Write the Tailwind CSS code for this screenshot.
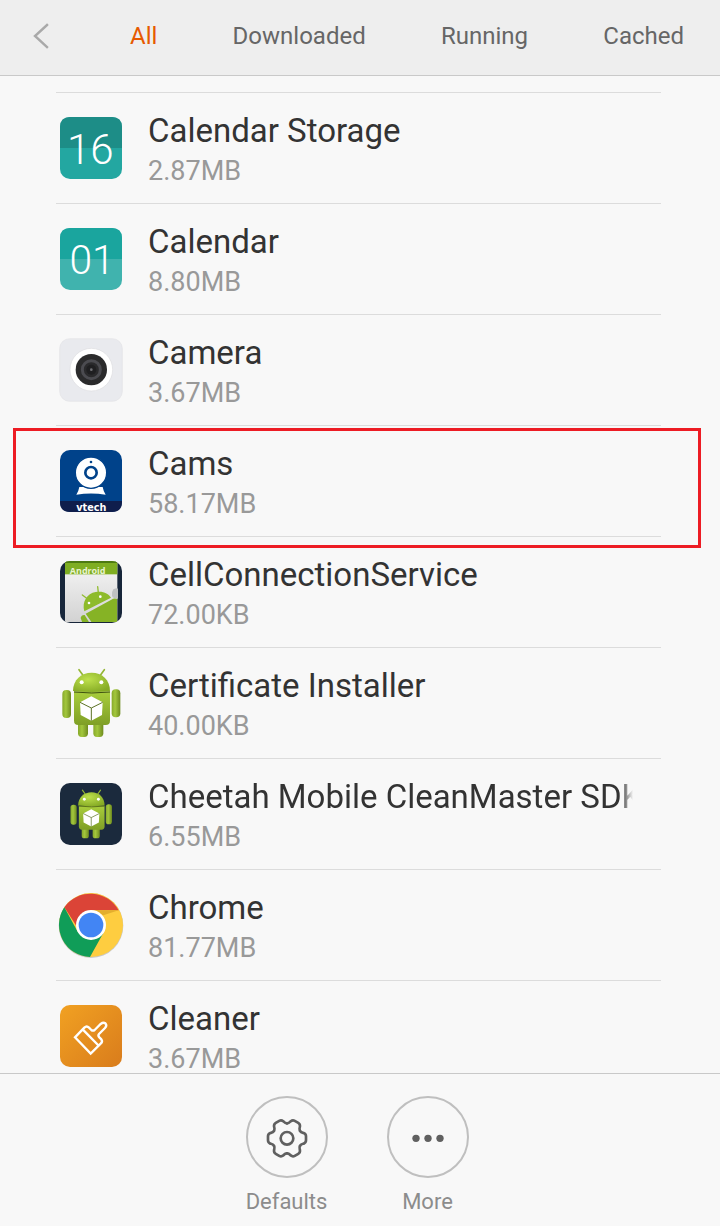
<!DOCTYPE html>
<html lang="en">
<head>
  <meta charset="UTF-8" />
  <meta name="viewport" content="width=device-width, initial-scale=1.0"/>
  <title>Apps</title>
  <script src="https://cdn.jsdelivr.net/npm/@tailwindcss/browser@4"></script>
</head>
<body class="flex h-screen flex-col bg-[#f8f8f8] font-['Roboto',sans-serif]">

  <!-- shared shapes -->
  <svg class="absolute size-0" aria-hidden="true">
    <defs>
      <linearGradient id="green" x1="0" y1="0" x2="0" y2="1">
        <stop offset="0" stop-color="#a9ce3c"/>
        <stop offset="1" stop-color="#7f9f26"/>
      </linearGradient>
      <radialGradient id="head" cx="0.4" cy="0.35" r="0.7">
        <stop offset="0" stop-color="#bde04c"/>
        <stop offset="1" stop-color="#86ab25"/>
      </radialGradient>
      <linearGradient id="arm" x1="0" y1="0" x2="1" y2="0">
        <stop offset="0" stop-color="#87a92b"/>
        <stop offset="0.4" stop-color="#a3c73d"/>
        <stop offset="1" stop-color="#6f8c1f"/>
      </linearGradient>
    </defs>
    <symbol id="robot" viewBox="18 24 210 210">
      <path d="M87 29l13 18M163 29l-13 18" stroke="#94b635" stroke-width="5" stroke-linecap="round"/>
      <rect x="84" y="180" width="30" height="51" rx="11" fill="url(#arm)"/>
      <rect x="130" y="180" width="30" height="51" rx="11" fill="url(#arm)"/>
      <rect x="37" y="90" width="26" height="84" rx="12" fill="url(#arm)"/>
      <rect x="185" y="88" width="26" height="84" rx="12" fill="url(#arm)"/>
      <path d="M72 94h108v88q0 13-13 13H85q-13 0-13-13z" fill="url(#green)"/>
      <path d="M69 93c0-34 25-55 56-55s55 21 55 55q-55 6-111 0z" fill="url(#head)"/>
      <path d="M72 96q53 6 108 0" fill="none" stroke="#3f5210" stroke-width="3"/>
      <circle cx="95" cy="67" r="6" fill="#fff"/>
      <circle cx="154" cy="67" r="6" fill="#fff"/>
      <path d="M124 109l34 18-2 38-32 17-32-17-2-38z" fill="#fff"/>
      <path d="M90 127l34 17 34-17M124 144v38" fill="none" stroke="#5d7326" stroke-width="3"/>
    </symbol>
  </svg>

  <header class="flex h-[76px] shrink-0 items-center border-b border-[#c9c9c9] bg-[#eeeeee] pr-9 pb-[3px] pl-8">
    <button type="button" aria-label="Back" class="w-[98px]">
      <svg class="h-7 w-5" viewBox="0 0 20 28" fill="none" stroke="#a9a9a9" stroke-width="2.4" stroke-linecap="square"><path d="M15 3L3 14l12 11"/></svg>
    </button>
    <nav class="flex flex-1 justify-between text-2xl text-[#666666]">
      <button type="button" class="text-[#e65a00]">All</button>
      <button type="button">Downloaded</button>
      <button type="button">Running</button>
      <button type="button">Cached</button>
    </nav>
  </header>

  <main class="min-h-0 flex-1 overflow-y-auto pt-4 pr-[59px] pl-14 [scrollbar-width:none]">
    <ul>
      <li class="flex h-[111px] items-center gap-[22px] border-t border-[#dcdcdc] pr-7">
        <svg class="size-[70px] shrink-0" viewBox="18 24 210 210">
          <rect x="30" y="36" width="186" height="186" rx="30" fill="#23a7a1"/>
          <path d="M30 129V66q0-30 30-30h126q30 0 30 30v63z" fill="#1d8d87"/>
          <text x="121" y="176" text-anchor="middle" font-family="Roboto" font-weight="300" font-size="126" fill="#fff">16</text>
        </svg>
        <div class="min-w-0 flex-1 pt-0.5">
          <h2 class="mb-1 truncate text-[33px] leading-10 text-[#333333]">Calendar Storage</h2>
          <p class="text-[27px] leading-8 text-[#999999]">2.87MB</p>
        </div>
      </li>
      <li class="flex h-[111px] items-center gap-[22px] border-t border-[#dcdcdc] pr-7">
        <svg class="size-[70px] shrink-0" viewBox="18 27 210 210">
          <rect x="30" y="39" width="186" height="186" rx="30" fill="#40b3ae"/>
          <path d="M30 132V69q0-30 30-30h126q30 0 30 30v63z" fill="#1aa59e"/>
          <text x="126" y="177" text-anchor="middle" font-family="Roboto" font-weight="300" font-size="122" fill="#fff">01</text>
        </svg>
        <div class="min-w-0 flex-1 pt-0.5">
          <h2 class="mb-1 truncate text-[33px] leading-10 text-[#333333]">Calendar</h2>
          <p class="text-[27px] leading-8 text-[#999999]">8.80MB</p>
        </div>
      </li>
      <li class="flex h-[111px] items-center gap-[22px] border-t border-[#dcdcdc] pr-7">
        <svg class="size-[70px] shrink-0" viewBox="18 15 210 210">
          <rect x="29" y="26" width="188" height="188" rx="30" fill="#e9eaee" stroke="#e2e3e6" stroke-width="2"/>
          <circle cx="124" cy="119" r="64" fill="#fff" stroke="#dcdde0" stroke-width="2"/>
          <circle cx="124" cy="119" r="47" fill="#2b2b2c"/>
          <circle cx="124" cy="119" r="27" fill="#2a2a2c" stroke="#4b4b50" stroke-width="9"/>
          <circle cx="124" cy="119" r="15" fill="#1f1f21"/>
          <circle cx="124" cy="119" r="4" fill="#707074"/>
        </svg>
        <div class="min-w-0 flex-1 pt-0.5">
          <h2 class="mb-1 truncate text-[33px] leading-10 text-[#333333]">Camera</h2>
          <p class="text-[27px] leading-8 text-[#999999]">3.67MB</p>
        </div>
      </li>
      <li class="relative flex h-[111px] items-center gap-[22px] border-t border-[#dcdcdc] pr-7">
        <span class="pointer-events-none absolute top-[2px] -right-10 -bottom-3 -left-[43px] border-3 border-[#ed1c24]"></span>
        <svg class="size-[70px] shrink-0" viewBox="18 18 210 210">
          <rect x="30" y="30" width="186" height="186" rx="30" fill="#00428a"/>
          <path d="M30 183h186v3q0 30-30 30H60q-30 0-30-30z" fill="#0f1e4c"/>
          <path d="M88 141h70q2 12 9 23-44-7-88 0 7-11 9-23z" fill="#fff"/>
          <circle cx="123" cy="98" r="47" fill="#fff" stroke="#00428a" stroke-width="4"/>
          <circle cx="123" cy="98" r="17" fill="#fff" stroke="#00428a" stroke-width="8"/>
          <circle cx="123" cy="66" r="4" fill="#00428a"/>
          <text x="124" y="213" text-anchor="middle" font-family="DejaVu Sans" font-weight="700" font-size="29" fill="#fff">vtech</text>
        </svg>
        <div class="min-w-0 flex-1 pt-0.5">
          <h2 class="mb-1 truncate text-[33px] leading-10 text-[#333333]">Cams</h2>
          <p class="text-[27px] leading-8 text-[#999999]">58.17MB</p>
        </div>
      </li>
      <li class="flex h-[111px] items-center gap-[22px] border-t border-[#dcdcdc] pr-7">
        <svg class="size-[70px] shrink-0" viewBox="18 15 210 210">
          <defs>
            <clipPath id="tile"><rect x="30" y="27" width="186" height="186" rx="30"/></clipPath>
            <clipPath id="page"><rect x="45" y="27" width="157" height="183"/></clipPath>
            <linearGradient id="paper" x1="0" y1="0" x2="0" y2="1">
              <stop offset="0" stop-color="#f7f7f7"/>
              <stop offset="1" stop-color="#d2d2d2"/>
            </linearGradient>
          </defs>
          <g clip-path="url(#tile)">
            <rect x="30" y="27" width="186" height="186" fill="#17263a"/>
            <rect x="45" y="27" width="157" height="183" fill="url(#paper)"/>
            <rect x="45" y="27" width="157" height="40" fill="#7fae22"/>
            <rect x="45" y="27" width="157" height="6" fill="#4d7a12"/>
            <text x="113" y="66" text-anchor="middle" font-family="Noto Sans" font-weight="700" font-size="27" fill="#e9f3cf">Android</text>
            <path d="M190 112q14-6 14 0v28q-14 0-18-8-2-12 4-20z" fill="#bfc1c2"/>
            <g clip-path="url(#page)">
              <path d="M97 129l12 9M143 104l2 18" stroke="#93bd32" stroke-width="4" stroke-linecap="round"/>
              <path d="M103 178c-8-28 8-54 34-58 22-4 38 4 46 17z" fill="#8ebb2b"/>
              <path d="M107 185l77-42q8-6 18-2v70h-77z" fill="#86b325"/>
              <path d="M92 198q2-10 12-9l16 26H98z" fill="#86b325"/>
              <circle cx="117" cy="153" r="4" fill="#fff"/>
              <circle cx="151" cy="134" r="4" fill="#fff"/>
            </g>
          </g>
        </svg>
        <div class="min-w-0 flex-1 pt-0.5">
          <h2 class="mb-1 truncate text-[33px] leading-10 text-[#333333]">CellConnectionService</h2>
          <p class="text-[27px] leading-8 text-[#999999]">72.00KB</p>
        </div>
      </li>
      <li class="flex h-[111px] items-center gap-[22px] border-t border-[#dcdcdc] pr-7">
        <svg class="size-[70px] shrink-0"><use href="#robot"/></svg>
        <div class="min-w-0 flex-1 pt-0.5">
          <h2 class="mb-1 truncate text-[33px] leading-10 text-[#333333]">Certificate Installer</h2>
          <p class="text-[27px] leading-8 text-[#999999]">40.00KB</p>
        </div>
      </li>
      <li class="flex h-[111px] items-center gap-[22px] border-t border-[#dcdcdc] pr-7">
        <svg class="size-[70px] shrink-0" viewBox="0 0 70 70">
          <rect x="4" y="4" width="62" height="62" rx="10" fill="#1b2a3d"/>
          <use href="#robot" x="10" y="10" width="50" height="50"/>
        </svg>
        <div class="min-w-0 flex-1 pt-0.5">
          <h2 class="mb-1 overflow-hidden text-[33px] leading-10 whitespace-nowrap text-[#333333] [mask-image:linear-gradient(to_right,black_calc(100%-12px),transparent)]">Cheetah Mobile CleanMaster SDK</h2>
          <p class="text-[27px] leading-8 text-[#999999]">6.55MB</p>
        </div>
      </li>
      <li class="flex h-[111px] items-center gap-[22px] border-t border-[#dcdcdc] pr-7">
        <svg class="size-[70px] shrink-0" viewBox="18 15 210 210">
          <circle cx="123" cy="122" r="97" fill="#c9c9c9"/>
          <circle cx="123" cy="120" r="96" fill="#fecd40"/>
          <path d="M123 76h83A96 96 0 0 0 43 67l42 65z" fill="#db4437"/>
          <path d="M43 67A96 96 0 0 0 120 216l40-72-37 20-40-24z" fill="#109d58"/>
          <path d="M123 76h83l-46 15z" fill="#e3ae2d"/>
          <circle cx="123" cy="120" r="45" fill="#fff"/>
          <circle cx="123" cy="120" r="37" fill="#4285f4"/>
        </svg>
        <div class="min-w-0 flex-1 pt-0.5">
          <h2 class="mb-1 truncate text-[33px] leading-10 text-[#333333]">Chrome</h2>
          <p class="text-[27px] leading-8 text-[#999999]">81.77MB</p>
        </div>
      </li>
      <li class="flex h-[111px] items-center gap-[22px] border-t border-[#dcdcdc] pr-7">
        <svg class="size-[70px] shrink-0" viewBox="18 18 210 210">
          <defs>
            <linearGradient id="orange" x1="0" y1="0" x2="1" y2="1">
              <stop offset="0" stop-color="#f1a122"/>
              <stop offset="1" stop-color="#d97c1c"/>
            </linearGradient>
          </defs>
          <rect x="30" y="30" width="186" height="186" rx="30" fill="url(#orange)"/>
          <path d="M75 127l28-29q7-7 14 0l7 7q5 4 10 0l18-18q8-6 14-2 6 7-1 14l-18 18q-4 5 1 10l6 6q5 7-2 13l-30 30zM98 103l46 47" fill="none" stroke="#fff" stroke-width="7" stroke-linejoin="miter"/>
        </svg>
        <div class="min-w-0 flex-1 pt-0.5">
          <h2 class="mb-1 truncate text-[33px] leading-10 text-[#333333]">Cleaner</h2>
          <p class="text-[27px] leading-8 text-[#999999]">3.67MB</p>
        </div>
      </li>
    </ul>
  </main>

  <footer class="flex shrink-0 justify-center gap-[59px] border-t border-[#c9c9c9] pt-[22px] pr-[6px] pb-2 text-[#8c8c8c]">
    <button type="button" class="flex w-[82px] flex-col items-center gap-2 text-[22px] leading-8">
      <span class="flex size-[82px] items-center justify-center rounded-full border-2 border-[#bfbfbf]">
        <svg class="size-[78px]" viewBox="-117 -121 234 234" fill="none" stroke="#606060" stroke-width="8" stroke-linecap="round">
          <circle r="19"/>
          <path id="tooth" d="M39 -22.500C42 -17 46 -17 50 -16Q57 -13 57 -6V6Q57 13 50 16C46 17 42 17 39 22.500"/>
          <use href="#tooth" transform="rotate(60)"/>
          <use href="#tooth" transform="rotate(120)"/>
          <use href="#tooth" transform="rotate(180)"/>
          <use href="#tooth" transform="rotate(240)"/>
          <use href="#tooth" transform="rotate(300)"/>
        </svg>
      </span>
      Defaults
    </button>
    <button type="button" class="flex w-[82px] flex-col items-center gap-2 text-[22px] leading-8">
      <span class="flex size-[82px] items-center justify-center rounded-full border-2 border-[#bfbfbf]">
        <svg class="size-[78px]" viewBox="-117 -121 234 234" fill="#606060">
          <circle cx="-36" r="11"/>
          <circle r="11"/>
          <circle cx="36" r="11"/>
        </svg>
      </span>
      More
    </button>
  </footer>

</body>
</html>
